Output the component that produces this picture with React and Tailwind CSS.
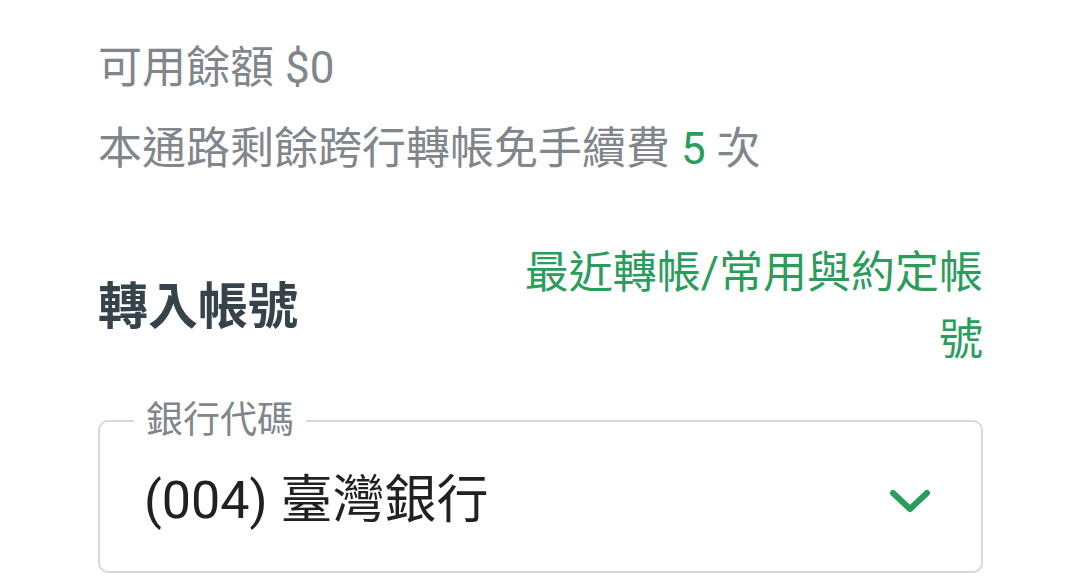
import React from "react";

function Chevron() {
  return (
    <svg width="44" height="28" viewBox="0 0 44 28" fill="none">
      <path d="M5 6 L22 22 L39 6" stroke="#2a9d5c" strokeWidth="6" strokeLinecap="round" strokeLinejoin="round" />
    </svg>
  );
}

export default function App() {
  return (
    <div
      className="w-[1080px] h-[585px] bg-white overflow-hidden pl-[98px] pr-[97px] pt-[28px]"
      style={{ fontFamily: "Roboto, 'Noto Sans CJK TC', sans-serif" }}
    >
      <div className="text-[44px] leading-[81px] text-[#80868b]">
        <p>可用餘額 $0</p>
        <p>
          本通路剩餘跨行轉帳免手續費 <span className="text-[#2a9d5c]">5</span> 次
        </p>
      </div>

      <div className="flex items-center justify-between mt-[50px]">
        <h2 className="text-[50px] font-bold text-[#36434b] leading-none">轉入帳號</h2>
        <a className="w-[480px] text-right text-[44px] leading-[67px] text-[#2a9d5c]">
          最近轉帳/常用與約定帳號
        </a>
      </div>

      <fieldset className="mt-[27px] border-2 border-[#d8d8d8] rounded-[10px] pl-[46px] pr-[49px] pb-[38px]">
        <legend className="-ml-[12px] px-[12px] text-[37px] leading-[40px] text-[#80868b]">銀行代碼</legend>
        <div className="flex items-center justify-between mt-[28px]">
          <span className="text-[52px] leading-[64px] text-[#212121] -ml-[2px]">(004) 臺灣銀行</span>
          <Chevron />
        </div>
      </fieldset>
    </div>
  );
}
